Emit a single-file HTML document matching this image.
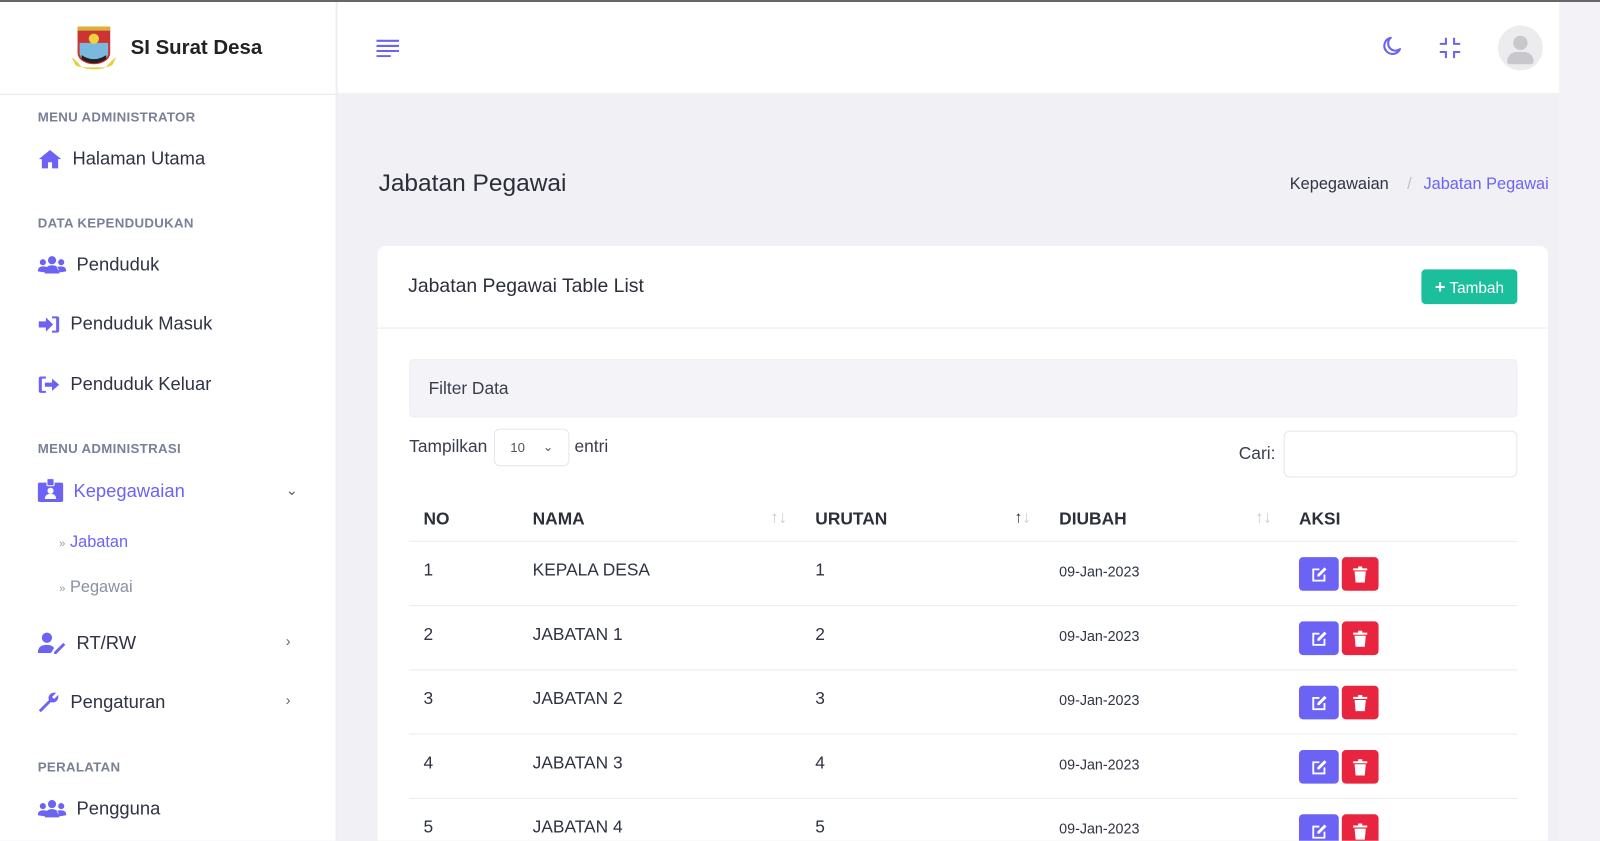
<!DOCTYPE html>
<html style="width:1600px;height:841px;overflow:hidden"><head><meta charset="utf-8"><style>
*{box-sizing:border-box;margin:0;padding:0}
body{width:1600px;height:841px;overflow:hidden;background:#f0f0f5;font-family:"Liberation Sans",sans-serif;position:relative;color:#2b2f3a}
#clip{position:absolute;left:0;top:0;width:1600px;height:841px;overflow:hidden}
#w{position:absolute;left:0;top:0;width:1568px;height:824px;overflow:hidden;transform:scale(1.0204);transform-origin:0 0}
.topline{position:absolute;left:0;top:0;width:1568px;height:2px;background:#666}
.side{position:absolute;left:0;top:2px;width:330px;height:822px;background:#fff;border-right:1px solid #e8eaf0}
.logo{height:91px;border-bottom:1px solid #e3e8ef;position:relative}
.logo .t{position:absolute;left:128px;top:34px;font-size:20px;font-weight:bold;color:#222}
.sec{position:absolute;left:37px;font-size:13px;font-weight:bold;color:#7a8196;letter-spacing:.3px}
.it{position:absolute;left:37px;font-size:18px;color:#2f3344;display:flex;align-items:center}
.it svg{margin-right:10px}
.sub{position:absolute;left:58px;font-size:16px;color:#8a90a2}
.chev{position:absolute;left:280px;font-size:14px;color:#666}
.hdr{position:absolute;left:331px;top:2px;width:1197px;height:89px;background:#fff}
.rstrip{position:absolute;left:1528px;top:2px;width:40px;height:822px;background:#f3f3f7}
.h1{position:absolute;left:371px;top:166px;font-size:24px;color:#2b2f3a}
.bc{position:absolute;top:172px;font-size:16px}
.card{position:absolute;left:370px;top:241px;width:1147px;height:583px;background:#fff;border-radius:8px 8px 0 0;overflow:hidden}
.ct{position:absolute;left:30px;top:29px;font-size:19px;color:#2b2f3a}
.btn{position:absolute;left:1023px;top:23px;width:94px;height:34px;background:#1cbf9c;border-radius:4px;color:#fff;font-size:15px;line-height:34px;text-align:center}
.hr{position:absolute;left:0;top:80px;width:1147px;height:1px;background:#e8eaf0}
.filter{position:absolute;left:31px;top:111px;width:1086px;height:57px;background:#f4f4f8;border:1px solid #eceef3;border-radius:4px;font-size:17px;line-height:56px;padding-left:18px;color:#3a3e4c}
.tx{position:absolute;font-size:17px;color:#3a3e4c}
.sel{position:absolute;left:114px;top:179px;width:74px;height:37px;border:1px solid #e3e6ec;border-radius:6px;font-size:13px;color:#555;line-height:36px;padding-left:15px}
.inp{position:absolute;left:888px;top:181px;width:229px;height:46px;border:1px solid #e3e6ec;border-radius:6px}
.th{position:absolute;top:258px;font-size:17px;font-weight:bold;color:#2b2f3a}
.srt{position:absolute;top:258px;font-size:16px;color:#c6c9d0}
.row{position:absolute;left:31px;width:1086px;height:1px;background:#e9ebef}
.td{position:absolute;font-size:17px;color:#2f3344}
.dt{position:absolute;font-size:14px;color:#2f3344}
.b{position:absolute;width:39px;height:33px;border-radius:4px;display:flex;align-items:center;justify-content:center}
</style></head><body>
<div id="clip">
<div id="w">
<div class="topline"></div>
<div class="side">
 <div class="logo">
  <svg style="position:absolute;left:68px;top:22px" width="48" height="46" viewBox="0 0 48 46"><path d="M8 2h32v26c0 6-7 11-16 11S8 34 8 28z" fill="#c33"/><path d="M8 2h32v4H8z" fill="#d9b23a"/><path d="M10 18h28v10c0 5-6 9-14 9s-14-4-14-9z" fill="#7ab8e0"/><path d="M12 30q12 8 24 0v4q-12 8-24 0z" fill="#222"/><path d="M2 32q6 4 10 10h24q4-6 10-10l-4 8q-18 8-36 0z" fill="#e6cf3a"/><circle cx="24" cy="14" r="5" fill="#f2d23b"/></svg>
  <div class="t">SI Surat Desa</div>
 </div>
 <div class="sec" style="top:105px">MENU ADMINISTRATOR</div>
 <div class="it" style="top:143px"><svg width="24" height="20" viewBox="0 0 24 20"><path d="M12 1L1 10h3v9h6v-6h4v6h6v-9h3z" fill="#6c63f5"/></svg>Halaman Utama</div>
 <div class="sec" style="top:209px">DATA KEPENDUDUKAN</div>
 <div class="it" style="top:247px"><svg width="28" height="20" viewBox="0 0 28 20"><circle cx="14" cy="5" r="4" fill="#6c63f5"/><circle cx="5" cy="7" r="3" fill="#6c63f5"/><circle cx="23" cy="7" r="3" fill="#6c63f5"/><path d="M7 18q0-8 7-8t7 8z M0 16q0-5 5-5t4 2q-2 2-2 4z M28 16q0-5-5-5t-4 2q2 2 2 4z" fill="#6c63f5"/></svg>Penduduk</div>
 <div class="it" style="top:305px"><svg width="22" height="20" viewBox="0 0 22 20"><path d="M1 7h7V3l7 7-7 7v-4H1z M14 2h5q2 0 2 2v12q0 2-2 2h-5v-2h4V4h-4z" fill="#6c63f5"/></svg>Penduduk Masuk</div>
 <div class="it" style="top:364px"><svg width="22" height="20" viewBox="0 0 22 20"><path d="M8 2H3Q1 2 1 4v12q0 2 2 2h5v-2H4V4h4z M7 8h7V4l7 6-7 6v-4H7z" fill="#6c63f5"/></svg>Penduduk Keluar</div>
 <div class="sec" style="top:430px">MENU ADMINISTRASI</div>
 <div class="it" style="top:467px;color:#6c63f5"><svg width="25" height="24" viewBox="0 0 25 24"><rect x="0" y="4" width="25" height="19" rx="2" fill="#6c63f5"/><rect x="9" y="0" width="7" height="7" rx="1" fill="#6c63f5" stroke="#fff"/><circle cx="12.5" cy="12" r="3" fill="#fff"/><path d="M7 20q0-5 5.5-5t5.5 5z" fill="#fff"/></svg>Kepegawaian</div>
 <div class="chev" style="top:470px">&#8964;</div>
 <div class="sub" style="top:521px;color:#6c63f5"><span style="font-size:11px;color:#999">»</span> Jabatan</div>
 <div class="sub" style="top:565px"><span style="font-size:11px;color:#999">»</span> Pegawai</div>
 <div class="it" style="top:617px"><svg width="28" height="22" viewBox="0 0 28 22"><circle cx="9" cy="6" r="5" fill="#6c63f5"/><path d="M0 21q0-8 9-8 5 0 7 3l-3 5z" fill="#6c63f5"/><path d="M16 20l9-9 2 2-9 9h-2z" fill="#6c63f5"/></svg>RT/RW</div>
 <div class="chev" style="top:618px">›</div>
 <div class="it" style="top:675px"><svg width="22" height="22" viewBox="0 0 22 22"><path d="M20 4l-4 4-2-2 4-4q-5-1-7 3-1 2 0 4L1 19l2 2 10-10q2 1 4 0 4-2 3-7z" fill="#6c63f5"/></svg>Pengaturan</div>
 <div class="chev" style="top:676px">›</div>
 <div class="sec" style="top:742px">PERALATAN</div>
 <div class="it" style="top:780px"><svg width="28" height="20" viewBox="0 0 28 20"><circle cx="14" cy="5" r="4" fill="#6c63f5"/><circle cx="5" cy="7" r="3" fill="#6c63f5"/><circle cx="23" cy="7" r="3" fill="#6c63f5"/><path d="M7 18q0-8 7-8t7 8z M0 16q0-5 5-5t4 2q-2 2-2 4z M28 16q0-5-5-5t-4 2q2 2 2 4z" fill="#6c63f5"/></svg>Pengguna</div>
</div>
<div class="hdr">
 <svg style="position:absolute;left:37px;top:36px" width="24" height="18" viewBox="0 0 24 18"><path d="M1 2h22M1 7h22M1 12h22M1 17h14" stroke="#6c63f5" stroke-width="2"/></svg>
 <svg style="position:absolute;left:1020px;top:32px" width="24" height="24" viewBox="0 0 24 24"><path d="M12 3a8 8 0 1 0 9 11A7 7 0 0 1 12 3z" fill="none" stroke="#6c63f5" stroke-width="2" stroke-linejoin="round"/></svg>
 <svg style="position:absolute;left:1078px;top:33px" width="24" height="24" viewBox="0 0 24 24"><path d="M8 2v6H2M16 2v6h6M8 22v-6H2M16 22v-6h6" fill="none" stroke="#6c63f5" stroke-width="2"/></svg>
 <div style="position:absolute;left:1137px;top:23px;width:44px;height:44px;border-radius:50%;background:#ececee;overflow:hidden"><div style="position:absolute;left:15px;top:10px;width:14px;height:14px;border-radius:50%;background:#c8c8cc"></div><div style="position:absolute;left:9px;top:26px;width:26px;height:12px;border-radius:10px 10px 3px 3px;background:#c8c8cc"></div></div>
</div>
<div class="rstrip"></div>
<div class="h1">Jabatan Pegawai</div>
<div class="bc" style="left:1264px;color:#2f3344">Kepegawaian</div>
<div class="bc" style="left:1379px;color:#c0c4cc">/</div>
<div class="bc" style="left:1395px;color:#6c63f5">Jabatan Pegawai</div>
<div class="card">
 <div class="ct">Jabatan Pegawai Table List</div>
 <div class="btn"><b style="font-size:18px">+</b> Tambah</div>
 <div class="hr"></div>
 <div class="filter">Filter Data</div>
 <div class="tx" style="left:31px;top:187px">Tampilkan</div>
 <div class="sel">10<span style="position:absolute;left:47px;top:-1px;font-size:12px">&#8964;</span></div>
 <div class="tx" style="left:193px;top:187px">entri</div>
 <div class="tx" style="left:844px;top:194px">Cari:</div>
 <div class="inp"></div>
 <div class="th" style="left:45px">NO</div>
 <div class="th" style="left:152px">NAMA</div><div class="srt" style="left:385px">↑↓</div>
 <div class="th" style="left:429px">URUTAN</div><div class="srt" style="left:624px"><span style="color:#333">↑</span>↓</div>
 <div class="th" style="left:668px">DIUBAH</div><div class="srt" style="left:860px">↑↓</div>
 <div class="th" style="left:903px">AKSI</div>
 <div class="row" style="top:289px"></div>
 <div class="row" style="top:352px"></div>
 <div class="row" style="top:415px"></div>
 <div class="row" style="top:478px"></div>
 <div class="row" style="top:541px"></div>
</div>
<div id="rows"></div>
</div>
</div>
<script>
var h='';var names=['KEPALA DESA','JABATAN 1','JABATAN 2','JABATAN 3','JABATAN 4'];
for(var i=0;i<5;i++){var y=549+i*63;
h+='<div class="td" style="left:415px;top:'+y+'px">'+(i+1)+'</div><div class="td" style="left:522px;top:'+y+'px">'+names[i]+'</div><div class="td" style="left:799px;top:'+y+'px">'+(i+1)+'</div><div class="dt" style="left:1038px;top:'+(y+3)+'px">09-Jan-2023</div>';
h+='<div class="b" style="left:1273px;top:'+(y-3)+'px;background:#6c63f5"><svg width="16" height="16" viewBox="0 0 16 16"><path d="M8 3H2v11h11V8" fill="none" stroke="#fff" stroke-width="1.8"/><path d="M13 1l2 2-7 7H6V8z" fill="#fff"/></svg></div>';
h+='<div class="b" style="left:1315px;top:'+(y-3)+'px;width:36px;background:#e8243f"><svg width="14" height="16" viewBox="0 0 14 16"><path d="M0 2h14v2H0zM5 0h4v2H5zM1.5 5h11l-1 11h-9z" fill="#fff"/></svg></div>';}
document.getElementById('rows').innerHTML=h;
</script>
</body></html>
